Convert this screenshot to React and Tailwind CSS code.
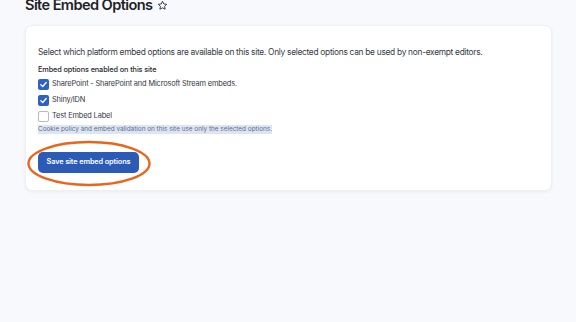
import React, { useState } from "react"

const options = [
  { id: "sharepoint", label: "SharePoint - SharePoint and Microsoft Stream embeds.", checked: true },
  { id: "shiny", label: "Shiny/IDN", checked: true },
  { id: "test", label: "Test Embed Label", checked: false },
]

const Checkbox = ({ checked }) => (
  <span
    className={`flex items-center justify-center w-[11px] h-[11px] rounded-[2px] ${checked ? "bg-[#2c62c6]" : "bg-white border border-[#b4b9c3]"}`}
  >
    {checked && (
      <svg viewBox="0 0 12 12" className="w-[9px] h-[9px]">
        <path d="M2.5 6.2 L5 8.6 L9.6 3.4" fill="none" stroke="white" strokeWidth="1.8" strokeLinecap="round" strokeLinejoin="round" />
      </svg>
    )}
  </span>
)

const App = () => {
  const [items, setItems] = useState(options)

  const toggle = (id) => {
    setItems(items.map((o) => (o.id === id ? { ...o, checked: !o.checked } : o)))
  }

  return (
    <div className="min-h-[322px] bg-[#f8f9fc] pl-[25px] pr-[24px] overflow-hidden font-['Inter',sans-serif]">
      <h1 className="-mt-[5px] flex items-center gap-[5px] text-[14.6px] leading-[20px] font-semibold text-[#1f2329] tracking-[-0.6px]">
        Site Embed Options
        <svg viewBox="0 0 24 24" className="w-[11px] h-[11px]" fill="none" stroke="#2a2e35" strokeWidth="2" strokeLinejoin="round">
          <path d="M12 2.8 l2.8 5.8 6.3 .8 -4.6 4.4 1.2 6.3 L12 17.1 6.3 20.1 7.5 13.8 2.9 9.4 9.2 8.6 Z" />
        </svg>
      </h1>

      <div className="mt-[10px] bg-white rounded-[7px] border border-[#eef0f4] shadow-[0_1px_3px_rgba(30,40,60,0.06)] px-3 pt-[19px] pb-[17px]">
        <p className="text-[8.4px] leading-[14px] text-[#363b44] tracking-[-0.3px] whitespace-nowrap">
          Select which platform embed options are available on this site. Only selected options can be used by non-exempt editors.
        </p>

        <div className="mt-[6px] text-[7.3px] leading-[10px] font-medium text-[#25292f] tracking-[-0.1px]">
          Embed options enabled on this site
        </div>

        <div className="mt-[1px] flex flex-col">
          {items.map((o) => (
            <label
              key={o.id}
              onClick={() => toggle(o.id)}
              className="flex items-center gap-[2px] h-[16px] cursor-pointer"
            >
              <Checkbox checked={o.checked} />
              <span className="text-[7.4px] text-[#33373e] ml-[1px] tracking-[-0.15px]">{o.label}</span>
            </label>
          ))}
        </div>

        <div className="mt-[1px] flex">
          <span className="text-[6.4px] leading-[9px] bg-[#dde5f4] text-[#5f6e8c]">
            Cookie policy and embed validation on this site use only the selected options.
          </span>
        </div>

        <div className="mt-[18px] flex">
          <div className="relative">
            <button className="block h-[21px] w-[101px] rounded-[5px] bg-[#2b5bb6] text-white text-[7.3px] font-semibold tracking-[-0.1px]">
              Save site embed options
            </button>
            <svg
              className="absolute -left-[11px] -top-[12px] w-[124px] h-[47px] pointer-events-none"
              viewBox="0 0 124 47"
              fill="none"
            >
              <ellipse cx="62" cy="23.5" rx="60.5" ry="21.5" stroke="#e8661c" strokeWidth="2.4" />
            </svg>
          </div>
        </div>
      </div>
    </div>
  )
}

export default App
